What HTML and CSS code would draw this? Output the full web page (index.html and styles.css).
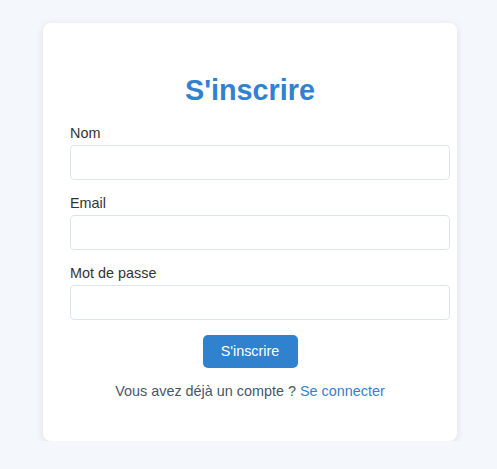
FILE: index.html
```html
<!DOCTYPE html>
<html lang="fr">
<head>
<meta charset="utf-8">
<link rel="stylesheet" href="styles.css">
</head>
<body>
<div class="card">
  <h1 class="title">S'inscrire</h1>
  <form class="form">
    <div class="group">
      <label class="label">Nom</label>
      <input class="input" type="text">
    </div>
    <div class="group">
      <label class="label">Email</label>
      <input class="input" type="email">
    </div>
    <div class="group">
      <label class="label">Mot de passe</label>
      <input class="input" type="password">
    </div>
    <div class="actions">
      <button class="btn" type="button">S'inscrire</button>
    </div>
  </form>
  <p class="foot">Vous avez déjà un compte ? <a class="link" href="#">Se connecter</a></p>
</div>
</body>
</html>
```
FILE: styles.css
```css
html, body { margin: 0; padding: 0; }
body {
  background: #f4f8fc;
  font-family: "Liberation Sans", Arial, sans-serif;
  color: #333;
  font-size: 14.4px;
}
.card {
  margin: 23px 0 0 43px;
  width: 360px;
  padding: 27px;
  background: #fff;
  border-radius: 8px;
  box-shadow: 0 2px 8px rgba(0,0,0,0.1);
}
.title {
  margin: 24px 0 19px;
  text-align: center;
  color: #3182ce;
  font-size: 28.8px;
  line-height: 32px;
  font-weight: bold;
}
.group { margin-bottom: 15px; }
.label {
  display: block;
  margin-bottom: 4px;
  font-size: 14.4px;
  line-height: 16px;
  color: #333;
}
.input {
  display: block;
  width: 100%;
  padding: 8px 9px;
  border: 1px solid #dfe4ec;
  border-radius: 4px;
  font-size: 14.4px;
  line-height: 17px;
  box-sizing: content-box;
  height: 17px;
  font-family: inherit;
}
.actions { text-align: center; }
.btn {
  background: #3182ce;
  color: #fff;
  border: none;
  border-radius: 5px;
  padding: 8px 18px;
  width: 95px;
  font-size: 14.4px;
  line-height: 17px;
  font-family: inherit;
}
.foot {
  text-align: center;
  margin: 15px 0 0;
  padding-bottom: 15px;
  line-height: 16px;
  color: #4a5568;
}
.link { color: #3182ce; text-decoration: none; }
```
